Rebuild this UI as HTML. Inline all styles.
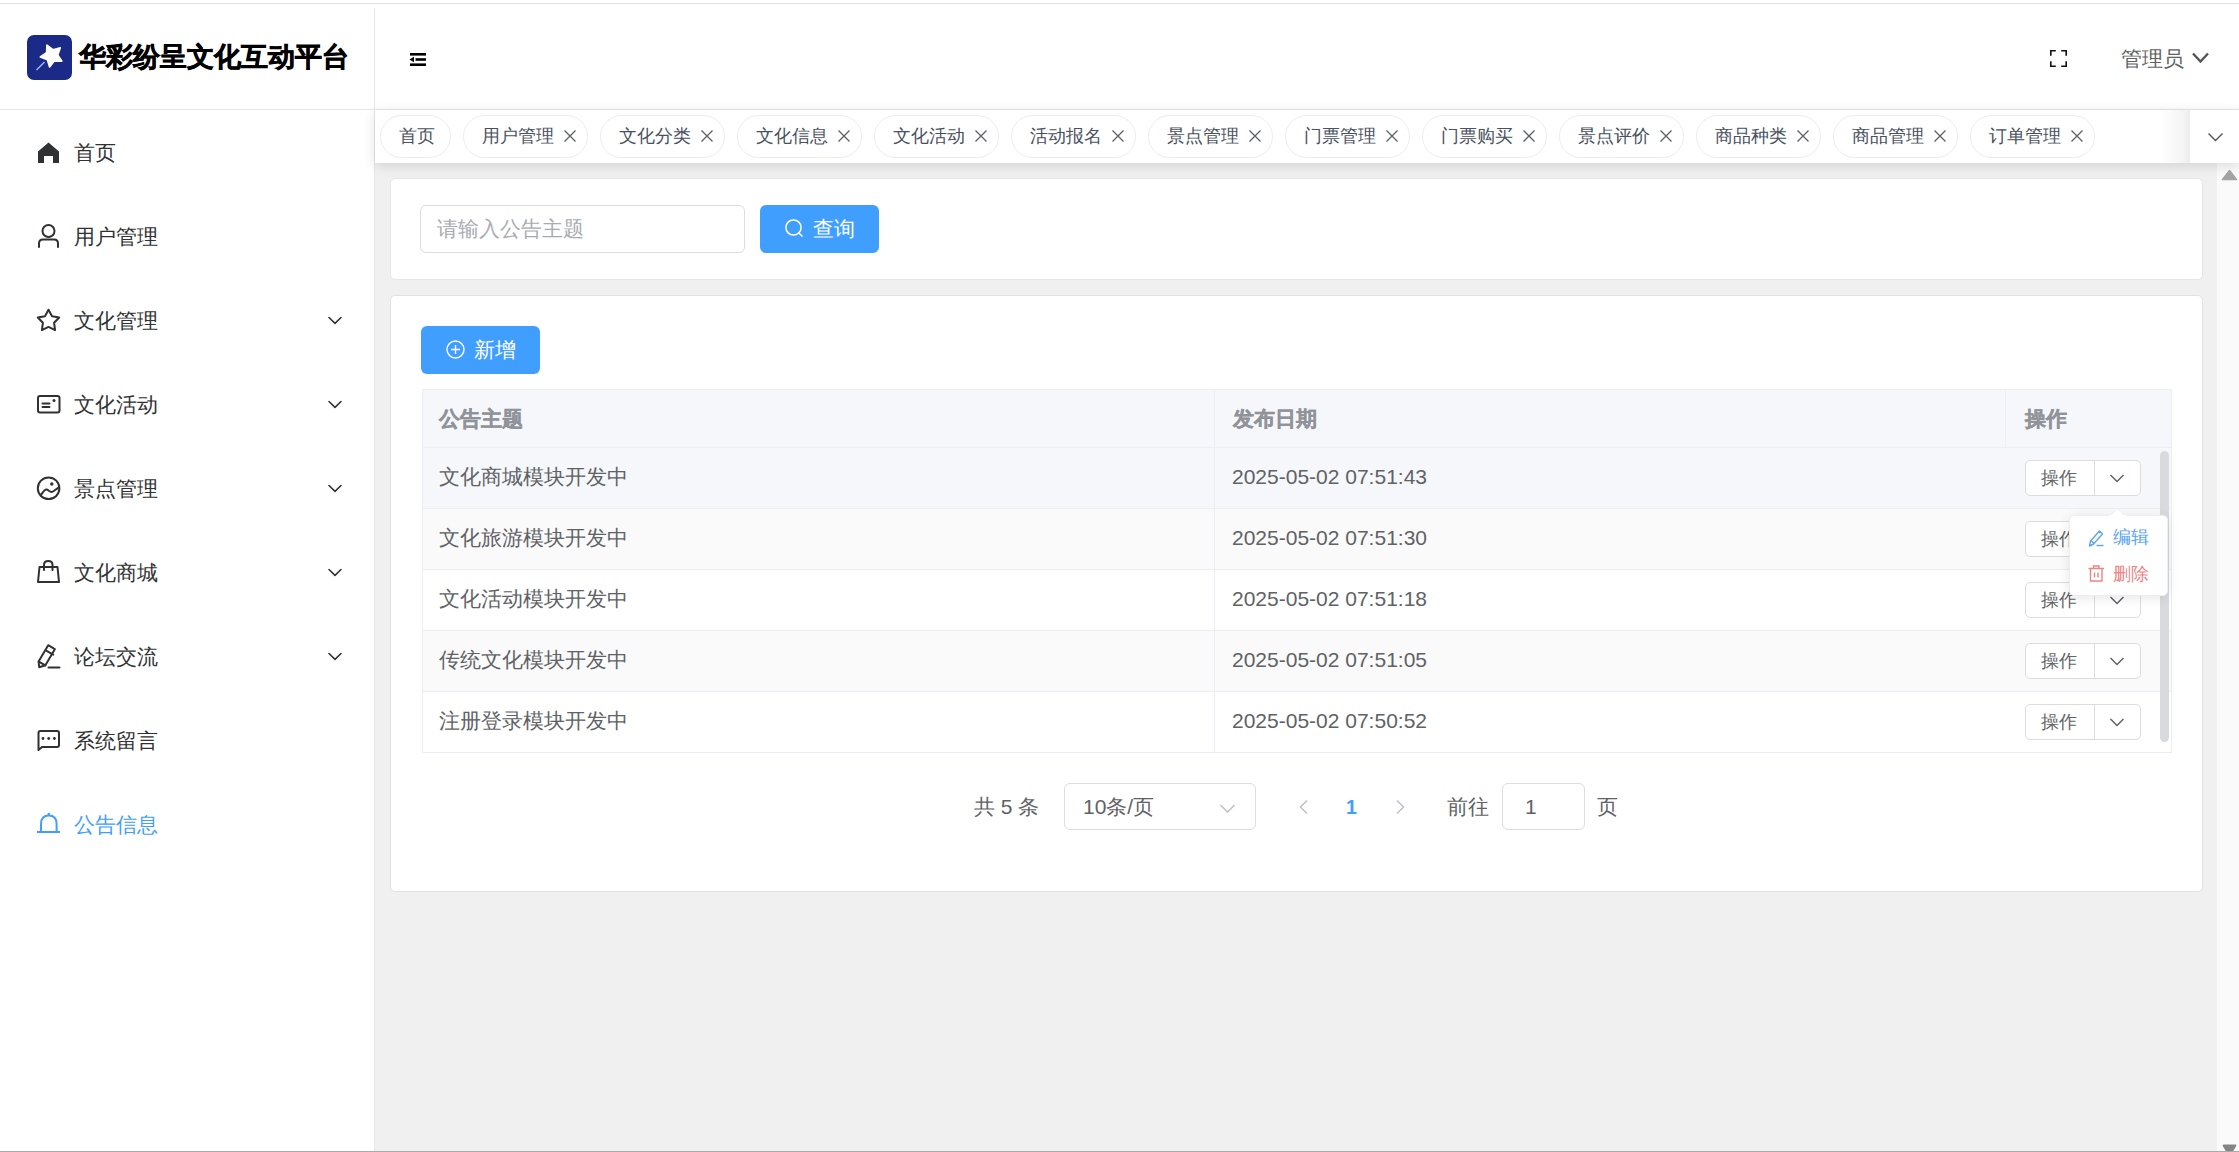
<!DOCTYPE html>
<html><head><meta charset="utf-8">
<style>
*{box-sizing:border-box;margin:0;padding:0}
html,body{width:2239px;height:1152px;overflow:hidden;background:#fff}
body{position:relative;font-family:"Liberation Sans",sans-serif;color:#303133}
.a{position:absolute}
svg{position:absolute;overflow:visible}
.t{position:absolute;white-space:nowrap;line-height:1}
/* frame */
#topline{left:0;top:3px;width:2239px;height:1px;background:#e0e0e0}
#botline{left:0;top:1151px;width:2239px;height:1px;background:#a9abab}
#side{left:0;top:4px;width:375px;height:1147px;background:#fff;border-right:1px solid #e6e6e6}
#sidefix{left:374px;top:4px;width:1px;height:4px;background:#fff}
#hdr{left:0;top:4px;width:2239px;height:106px;border-bottom:1px solid #e6e6e6}
#main{left:375px;top:163px;width:1842px;height:988px;background:#f0f0f0}
#tags{left:375px;top:110px;width:1864px;height:53px;background:#fff;box-shadow:0 3px 12px rgba(0,0,0,0.12)}
.tag{position:absolute;top:115px;height:43px;border:1px solid #ececec;border-radius:22px;background:#fff;font-size:18px;color:#495060}
.tagt{font-size:18px;color:#495060}
.th{font-size:21px;font-weight:bold;color:#909399;-webkit-text-stroke:0.3px #909399}
.td{font-size:21px;color:#606266}
.pg{font-size:21px;color:#606266}
.menu{font-size:21px;color:#303133}
.card{position:absolute;background:#fff;border:1px solid #e6e6e6;border-radius:5px}
</style></head><body>
<div id="topline" class="a"></div>
<div id="main" class="a"></div>
<div class="a" style="left:2217px;top:163px;width:22px;height:988px;background:#fafafa"></div>
<div id="side" class="a"></div>
<div id="hdr" class="a"></div>
<div id="sidefix" class="a"></div>
<div id="tags" class="a"></div>
<!-- logo -->
<svg style="left:0;top:0" width="380" height="110">
<rect x="27" y="35" width="45" height="45" rx="7" fill="#1b2987"/>
<polygon points="46.9,45.1 52.9,49.7 60.3,47.7 57.8,54.9 61.9,61.2 54.3,61.0 49.6,67.0 47.4,59.7 40.3,57.0 46.6,52.7" fill="#fff" stroke="#fff" stroke-width="1.6" stroke-linejoin="round"/>
<line x1="36.5" y1="70" x2="44.5" y2="62" stroke="#aab6f2" stroke-width="1.4"/>
</svg>
<div class="t" style="left:79px;top:44px;font-size:27px;font-weight:bold;color:#000;-webkit-text-stroke:0.6px #000">华彩纷呈文化互动平台</div>
<!-- hamburger -->
<svg style="left:0;top:0" width="440" height="80">
<rect x="410" y="53" width="16" height="2.6" fill="#000"/>
<rect x="415.5" y="58.2" width="10.5" height="2.6" fill="#000"/>
<rect x="410" y="63.4" width="16" height="2.6" fill="#000"/>
<polygon points="409.5,59.5 414,56.8 414,62.2" fill="#000"/>
</svg>
<!-- fullscreen -->
<svg style="left:0;top:0" width="2239" height="110">
<path d="M2050.8,55.8 V50.8 H2055.8 M2061.2,50.8 H2066.2 V55.8 M2066.2,61.2 V66.2 H2061.2 M2055.8,66.2 H2050.8 V61.2" fill="none" stroke="#111" stroke-width="1.6"/>
<path d="M2193,53.5 L2200.5,61.5 L2208,53.5" fill="none" stroke="#555" stroke-width="2.4"/>
</svg>
<div class="t" style="left:2121px;top:48px;font-size:21px;color:#606266">管理员</div>
<!-- sidebar menu -->
<svg style="left:0;top:0" width="375" height="900">
<g fill="none" stroke="#303133" stroke-width="2" stroke-linecap="round" stroke-linejoin="round">
<!-- user -->
<circle cx="48.5" cy="231" r="6"/>
<path d="M39,247 V243.5 Q39,239.5 43,239.5 H54 Q58,239.5 58,243.5 V247"/>
<!-- star -->
<polygon points="48.5,309.7 52.0,316.2 59.2,317.5 54.1,322.8 55.1,330.1 48.5,326.9 41.9,330.1 42.9,322.8 37.8,317.5 45.0,316.2"/>
<!-- ticket -->
<rect x="38" y="396" width="21.5" height="16.5" rx="2"/>
<line x1="42.5" y1="403.5" x2="49.5" y2="403.5"/>
<line x1="42.5" y1="407" x2="49.5" y2="407"/>
<!-- picture round -->
<circle cx="48.6" cy="488.3" r="10.8"/>
<path d="M40.8,495.2 C43,492 44.5,489.5 46.5,489.6 C48.3,489.7 49.5,492 51.5,491.9 C53.5,491.8 55.5,489.5 58.8,487.3"/>
<!-- bag -->
<path d="M39.5,567 H57.5 L59,582 H38 Z"/>
<path d="M44,570 V565 Q44,561 48.3,561 Q52.5,561 52.5,565 V570"/>
<!-- pen -->
<path d="M39.2,667.2 L38.6,661.5 L48.2,645.2 L54.8,649.2 L45.4,665.3 Z"/>
<line x1="46.6" y1="650.9" x2="53.2" y2="654.6"/>
<line x1="38.8" y1="661.7" x2="45.3" y2="665.4"/>
<line x1="48.5" y1="667.5" x2="59.5" y2="667.5"/>
<!-- chat -->
<path d="M38.5,750 V733 Q38.5,731 40.5,731 H57 Q59,731 59,733 V745 Q59,747 57,747 H42 Z"/>
</g>
<g fill="none" stroke="#303133" stroke-width="1.6" stroke-linecap="round" stroke-linejoin="round">
<path d="M329,317.5 L335,323.3 L341,317.5"/>
<path d="M329,401.5 L335,407.3 L341,401.5"/>
<path d="M329,485.5 L335,491.3 L341,485.5"/>
<path d="M329,569.5 L335,575.3 L341,569.5"/>
<path d="M329,653.5 L335,659.3 L341,653.5"/>
</g>
<!-- home -->
<path d="M48.5,142.5 L59,151.5 V163 H53 V156 H44 V163 H38 V151.5 Z" fill="#303133"/>
<circle cx="54" cy="400.5" r="1.5" fill="#303133"/>
<circle cx="51.8" cy="484" r="1.7" fill="#303133"/>
<circle cx="43" cy="738.5" r="1.4" fill="#303133"/>
<circle cx="48.7" cy="738.5" r="1.4" fill="#303133"/>
<circle cx="54.4" cy="738.5" r="1.4" fill="#303133"/>
<!-- bell -->
<g fill="none" stroke="#409eff" stroke-width="2">
<path d="M41,832 V824 Q41,815.5 48.8,815.5 Q56.6,815.5 56.6,824 V832"/>
<line x1="37" y1="832" x2="60" y2="832"/>
</g>
<circle cx="48.8" cy="814" r="1.3" fill="#409eff"/>
</svg>
<div class="t menu" style="left:74px;top:142px">首页</div>
<div class="t menu" style="left:74px;top:226px">用户管理</div>
<div class="t menu" style="left:74px;top:310px">文化管理</div>
<div class="t menu" style="left:74px;top:394px">文化活动</div>
<div class="t menu" style="left:74px;top:478px">景点管理</div>
<div class="t menu" style="left:74px;top:562px">文化商城</div>
<div class="t menu" style="left:74px;top:646px">论坛交流</div>
<div class="t menu" style="left:74px;top:730px">系统留言</div>
<div class="t menu" style="left:74px;top:814px;color:#409eff">公告信息</div>
<!-- tags -->
<div class="tag" style="left:380px;width:71px"></div>
<div class="t tagt" style="left:399px;top:127px">首页</div>
<div class="tag" style="left:463px;width:125px"></div>
<div class="t tagt" style="left:482px;top:127px">用户管理</div>
<div class="tag" style="left:600px;width:125px"></div>
<div class="t tagt" style="left:619px;top:127px">文化分类</div>
<div class="tag" style="left:737px;width:125px"></div>
<div class="t tagt" style="left:756px;top:127px">文化信息</div>
<div class="tag" style="left:874px;width:125px"></div>
<div class="t tagt" style="left:893px;top:127px">文化活动</div>
<div class="tag" style="left:1011px;width:125px"></div>
<div class="t tagt" style="left:1030px;top:127px">活动报名</div>
<div class="tag" style="left:1148px;width:125px"></div>
<div class="t tagt" style="left:1167px;top:127px">景点管理</div>
<div class="tag" style="left:1285px;width:125px"></div>
<div class="t tagt" style="left:1304px;top:127px">门票管理</div>
<div class="tag" style="left:1422px;width:125px"></div>
<div class="t tagt" style="left:1441px;top:127px">门票购买</div>
<div class="tag" style="left:1559px;width:125px"></div>
<div class="t tagt" style="left:1578px;top:127px">景点评价</div>
<div class="tag" style="left:1696px;width:125px"></div>
<div class="t tagt" style="left:1715px;top:127px">商品种类</div>
<div class="tag" style="left:1833px;width:125px"></div>
<div class="t tagt" style="left:1852px;top:127px">商品管理</div>
<div class="tag" style="left:1970px;width:125px"></div>
<div class="t tagt" style="left:1989px;top:127px">订单管理</div>
<div class="a" style="left:2160px;top:110px;width:30px;height:53px;background:linear-gradient(to right,rgba(255,255,255,0),#f4f4f4 80%,#ececec)"></div>
<div class="a" style="left:2190px;top:110px;width:49px;height:53px;background:#fff"></div>
<svg style="left:0;top:0" width="2239" height="170"><g fill="none" stroke="#5c6068" stroke-width="1.3">
<path d="M564.5,130.5 L575.5,141.5 M575.5,130.5 L564.5,141.5"/>
<path d="M701.5,130.5 L712.5,141.5 M712.5,130.5 L701.5,141.5"/>
<path d="M838.5,130.5 L849.5,141.5 M849.5,130.5 L838.5,141.5"/>
<path d="M975.5,130.5 L986.5,141.5 M986.5,130.5 L975.5,141.5"/>
<path d="M1112.5,130.5 L1123.5,141.5 M1123.5,130.5 L1112.5,141.5"/>
<path d="M1249.5,130.5 L1260.5,141.5 M1260.5,130.5 L1249.5,141.5"/>
<path d="M1386.5,130.5 L1397.5,141.5 M1397.5,130.5 L1386.5,141.5"/>
<path d="M1523.5,130.5 L1534.5,141.5 M1534.5,130.5 L1523.5,141.5"/>
<path d="M1660.5,130.5 L1671.5,141.5 M1671.5,130.5 L1660.5,141.5"/>
<path d="M1797.5,130.5 L1808.5,141.5 M1808.5,130.5 L1797.5,141.5"/>
<path d="M1934.5,130.5 L1945.5,141.5 M1945.5,130.5 L1934.5,141.5"/>
<path d="M2071.5,130.5 L2082.5,141.5 M2082.5,130.5 L2071.5,141.5"/>
</g>
<path d="M2208.5,133.5 L2215.5,140.5 L2222.5,133.5" fill="none" stroke="#555" stroke-width="1.4"/>
</svg>
<!-- card 1 -->
<div class="card" style="left:390px;top:178px;width:1813px;height:102px;border-color:#e6e6e6"></div>
<div class="a" style="left:420px;top:205px;width:325px;height:48px;border:1px solid #dcdcdc;border-radius:6px;background:#fff"></div>
<div class="t" style="left:437px;top:218px;font-size:21px;color:#a8abb2">请输入公告主题</div>
<div class="a" style="left:760px;top:205px;width:119px;height:48px;border-radius:6px;background:#409eff"></div>
<svg style="left:0;top:0" width="900" height="300"><g fill="none" stroke="#fff" stroke-width="1.5"><circle cx="793.5" cy="227.5" r="7.6"/><path d="M799,233 L802.5,236.5"/></g></svg>
<div class="t" style="left:813px;top:218px;font-size:21px;color:#fff">查询</div>
<!-- card 2 -->
<div class="card" style="left:390px;top:295px;width:1813px;height:597px;border-color:#e2e2e2"></div>
<div class="a" style="left:421px;top:326px;width:119px;height:48px;border-radius:6px;background:#409eff"></div>
<svg style="left:0;top:0" width="900" height="400"><g fill="none" stroke="#fff" stroke-width="1.4"><circle cx="455.5" cy="349.5" r="8.5"/><path d="M455.5,345 V354 M451,349.5 H460"/></g></svg>
<div class="t" style="left:474px;top:339px;font-size:21px;color:#fff">新增</div>
<!-- table -->
<div class="a" style="left:422px;top:389px;width:1750px;height:364px;border:1px solid #ebeef5;background:#fff"></div>
<div class="a" style="left:423px;top:390px;width:1748px;height:58px;background:#f5f7fa;border-bottom:1px solid #ebeef5"></div>
<div class="a" style="left:423px;top:448px;width:1748px;height:61px;background:#f5f7fa;border-bottom:1px solid #ebeef5"></div>
<div class="a" style="left:423px;top:509px;width:1748px;height:61px;background:#fafafa;border-bottom:1px solid #ebeef5"></div>
<div class="a" style="left:423px;top:570px;width:1748px;height:61px;background:#fff;border-bottom:1px solid #ebeef5"></div>
<div class="a" style="left:423px;top:631px;width:1748px;height:61px;background:#fafafa;border-bottom:1px solid #ebeef5"></div>
<div class="a" style="left:423px;top:692px;width:1748px;height:60px;background:#fff"></div>
<div class="a" style="left:1214px;top:390px;width:1px;height:362px;background:#ebeef5"></div>
<div class="a" style="left:2005px;top:390px;width:1px;height:57px;background:#ebeef5"></div>
<div class="t th" style="left:439px;top:408px">公告主题</div>
<div class="t th" style="left:1233px;top:408px">发布日期</div>
<div class="t th" style="left:2025px;top:408px">操作</div>
<div class="t td" style="left:439px;top:466px">文化商城模块开发中</div>
<div class="t td" style="left:1232px;top:466px">2025-05-02 07:51:43</div>
<div class="a" style="left:2025px;top:460px;width:116px;height:36px;border:1px solid #dcdcdc;border-radius:5px;background:#fff"></div>
<div class="a" style="left:2094px;top:460px;width:1px;height:36px;background:#dcdcdc"></div>
<div class="t" style="left:2041px;top:469px;font-size:18px;color:#606266">操作</div>
<div class="t td" style="left:439px;top:527px">文化旅游模块开发中</div>
<div class="t td" style="left:1232px;top:527px">2025-05-02 07:51:30</div>
<div class="a" style="left:2025px;top:521px;width:116px;height:36px;border:1px solid #dcdcdc;border-radius:5px;background:#fff"></div>
<div class="a" style="left:2094px;top:521px;width:1px;height:36px;background:#dcdcdc"></div>
<div class="t" style="left:2041px;top:530px;font-size:18px;color:#606266">操作</div>
<div class="t td" style="left:439px;top:588px">文化活动模块开发中</div>
<div class="t td" style="left:1232px;top:588px">2025-05-02 07:51:18</div>
<div class="a" style="left:2025px;top:582px;width:116px;height:36px;border:1px solid #dcdcdc;border-radius:5px;background:#fff"></div>
<div class="a" style="left:2094px;top:582px;width:1px;height:36px;background:#dcdcdc"></div>
<div class="t" style="left:2041px;top:591px;font-size:18px;color:#606266">操作</div>
<div class="t td" style="left:439px;top:649px">传统文化模块开发中</div>
<div class="t td" style="left:1232px;top:649px">2025-05-02 07:51:05</div>
<div class="a" style="left:2025px;top:643px;width:116px;height:36px;border:1px solid #dcdcdc;border-radius:5px;background:#fff"></div>
<div class="a" style="left:2094px;top:643px;width:1px;height:36px;background:#dcdcdc"></div>
<div class="t" style="left:2041px;top:652px;font-size:18px;color:#606266">操作</div>
<div class="t td" style="left:439px;top:710px">注册登录模块开发中</div>
<div class="t td" style="left:1232px;top:710px">2025-05-02 07:50:52</div>
<div class="a" style="left:2025px;top:704px;width:116px;height:36px;border:1px solid #dcdcdc;border-radius:5px;background:#fff"></div>
<div class="a" style="left:2094px;top:704px;width:1px;height:36px;background:#dcdcdc"></div>
<div class="t" style="left:2041px;top:713px;font-size:18px;color:#606266">操作</div>
<svg style="left:0;top:0" width="2239" height="800"><g fill="none" stroke="#606266" stroke-width="1.5">
<path d="M2110.5,475.0 L2117,481.5 L2123.5,475.0"/>
<path d="M2110.5,536.0 L2117,542.5 L2123.5,536.0"/>
<path d="M2110.5,597.0 L2117,603.5 L2123.5,597.0"/>
<path d="M2110.5,658.0 L2117,664.5 L2123.5,658.0"/>
<path d="M2110.5,719.0 L2117,725.5 L2123.5,719.0"/>
</g></svg>
<!-- table scrollbar -->
<div class="a" style="left:2160px;top:451px;width:9px;height:291px;border-radius:5px;background:#d9dadd"></div>
<!-- pagination -->
<div class="t pg" style="left:974px;top:796px">共 5 条</div>
<div class="a" style="left:1064px;top:783px;width:192px;height:47px;border:1px solid #dcdcdc;border-radius:6px;background:#fff"></div>
<div class="t pg" style="left:1083px;top:796px">10条/页</div>
<div class="a" style="left:1502px;top:783px;width:83px;height:47px;border:1px solid #dcdcdc;border-radius:6px;background:#fff"></div>
<div class="t pg" style="left:1525px;top:796px">1</div>
<div class="t pg" style="left:1447px;top:796px">前往</div>
<div class="t pg" style="left:1597px;top:796px">页</div>
<div class="t" style="left:1346px;top:798px;font-size:19.5px;font-weight:bold;color:#409eff">1</div>
<svg style="left:0;top:0" width="2239" height="900"><g fill="none" stroke="#c0c4cc" stroke-width="1.6">
<path d="M1220.5,805 L1227.5,812 L1234.5,805"/>
<path d="M1307,800.5 L1300.5,807 L1307,813.5"/>
<path d="M1397,800.5 L1403.5,807 L1397,813.5"/>
</g></svg>
<!-- dropdown popup -->
<div class="a" style="left:2069px;top:515px;width:99px;height:81px;background:#fff;border:1px solid #ebeef5;border-radius:5px;box-shadow:0 2px 12px rgba(0,0,0,0.10)"></div>
<svg style="left:0;top:0" width="2239" height="900">
<polygon points="2110.5,515.5 2117.5,508.5 2124.5,515.5" fill="#fff" stroke="#ebeef5" stroke-width="1"/>
<rect x="2109" y="515" width="17" height="2" fill="#fff"/>
<g fill="none" stroke="#5aa4f0" stroke-width="1.4" stroke-linejoin="round">
<path d="M2089.5,546 L2090.5,541 L2099.5,531 L2102.5,534 L2093.5,544 Z"/>
<line x1="2091" y1="540.5" x2="2094" y2="543.5"/>
<line x1="2096.5" y1="545.5" x2="2103.5" y2="545.5"/>
</g>
<g fill="none" stroke="#ea8585" stroke-width="1.4">
<path d="M2088.5,568.5 H2104 M2093.5,568.5 V566 H2099 V568.5 M2090.5,568.5 V581 H2102 V568.5 M2094.5,572.5 V577.5 M2098,572.5 V577.5"/>
</g>
</svg>
<div class="t" style="left:2113px;top:528px;font-size:18px;color:#5aa4f0">编辑</div>
<div class="t" style="left:2113px;top:565px;font-size:18px;color:#ea8585">删除</div>
<!-- page scrollbar -->
<svg style="left:0;top:0" width="2239" height="1152">
<polygon points="2229.5,170.5 2236.5,179.5 2222.5,179.5" fill="#a3a3a3" stroke="#a3a3a3" stroke-width="1.5" stroke-linejoin="round"/>
<polygon points="2223.5,1145.5 2235.5,1145.5 2232.5,1150.5 2226.5,1150.5" fill="#858585" stroke="#858585" stroke-width="1.8" stroke-linejoin="round"/>
</svg>
<div id="botline" class="a"></div>
</body></html>
